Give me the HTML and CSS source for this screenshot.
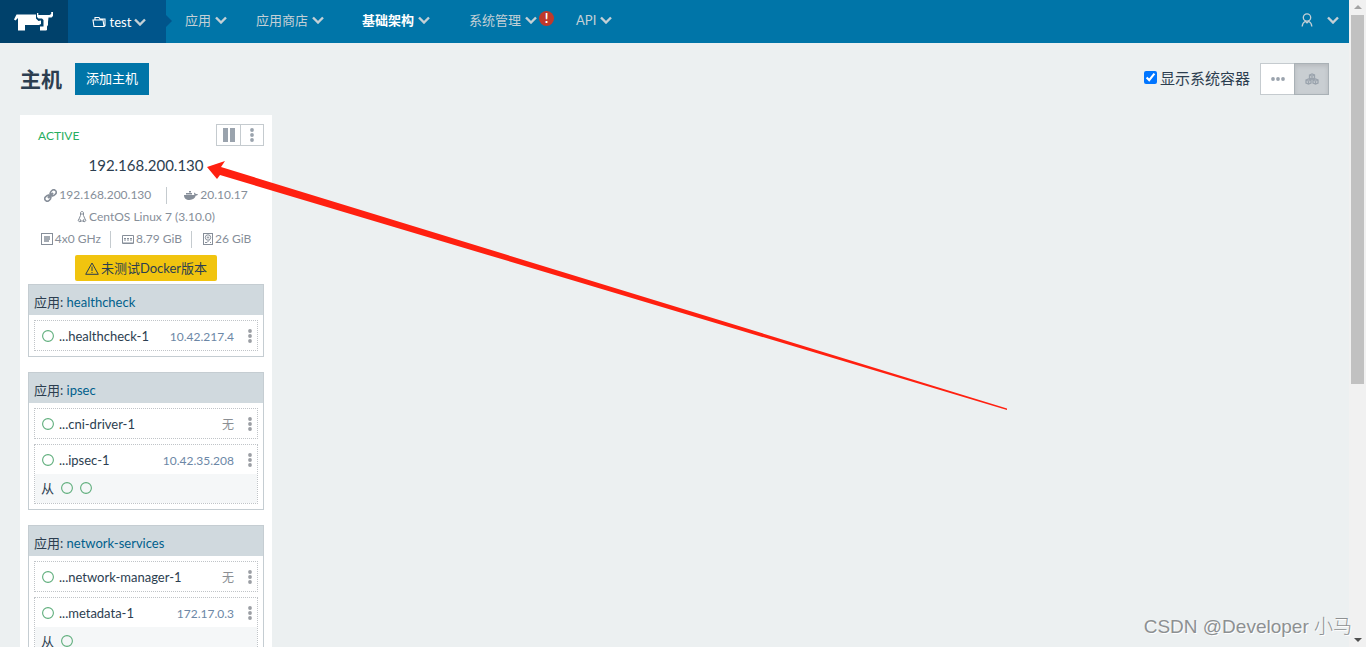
FILE: index.html
```html
<!DOCTYPE html>
<html lang="zh">
<head>
  <meta charset="UTF-8">
  <meta name="viewport" content="width=device-width, initial-scale=1">
  <title>主机</title>
  <link rel="stylesheet" href="styles.css">
</head>
<body>
  <!-- Shared icons -->
  <svg class="sprite" aria-hidden="true">
    <symbol id="chevron" viewBox="0 0 12 8"><path d="M1 1.5l5 5 5-5" fill="none" stroke="currentColor" stroke-width="2.4"/></symbol>
    <symbol id="dots" viewBox="0 0 4 14"><g fill="currentColor"><circle cx="2" cy="2" r="1.9"/><circle cx="2" cy="7" r="1.9"/><circle cx="2" cy="12" r="1.9"/></g></symbol>
    <symbol id="ring" viewBox="0 0 12 12"><circle cx="6" cy="6" r="5.4" fill="none" stroke="currentColor" stroke-width="1.1"/></symbol>
  </svg>

  <div class="window">
    <div class="page">
      <nav class="navbar">
        <a class="logo" href="#" aria-label="Home">
          <svg width="40" height="20" viewBox="0 0 40 20" fill="#fff">
            <path d="M0 7.500L2.500 2.500H22v4l2.500 2.500 2.500-.5V12l-2 1H11v5.500H4V6L1.500 8.500z"/>
            <path d="M23 1h1.300v2H35.500l1.700-1V0H39v4l-1.500 1.500H34.500L34 10v3l-1 1.500v3.500l-1 .5h-6v-4h3.500V8L28 6.500h-3.500L23 5z"/>
          </svg>
        </a>
        <a class="env" href="#">
          <svg width="14" height="12" viewBox="0 0 14 12" fill="none" stroke="#fff" stroke-width="1.100"><path d="M3 4V1.500h4l1 1.500h5v6.500l-1 1M1 4h10l1 6.500H2z"/></svg>
          <span>test</span>
          <svg class="chevron" width="12" height="8"><use href="#chevron"/></svg>
        </a>
        <div class="menu">
          <a href="#"><span>应用</span><svg class="chevron" width="12" height="8"><use href="#chevron"/></svg></a>
          <a href="#"><span>应用商店</span><svg class="chevron" width="12" height="8"><use href="#chevron"/></svg></a>
          <a class="current" href="#"><span>基础架构</span><svg class="chevron" width="12" height="8"><use href="#chevron"/></svg></a>
          <a href="#"><span>系统管理</span><svg class="chevron" width="12" height="8"><use href="#chevron"/></svg><b class="alert">!</b></a>
          <a href="#"><span>API</span><svg class="chevron" width="12" height="8"><use href="#chevron"/></svg></a>
        </div>
        <a class="user" href="#" aria-label="User">
          <svg width="12" height="14" viewBox="0 0 12 14" fill="none" stroke="currentColor" stroke-width="1.300"><circle cx="6" cy="4.500" r="3.700"/><path d="M4 8l2 1.800L8 8M4 8.500C2 9.500 1.300 11 1.200 13.500M8 8.500c2 1 2.700 2.500 2.800 5"/></svg>
          <svg class="chevron" width="12" height="8"><use href="#chevron"/></svg>
        </a>
      </nav>

      <header class="heading">
        <h1>主机</h1>
        <button class="add" type="button">添加主机</button>
        <div class="tools">
          <input type="checkbox" id="system" checked>
          <label for="system">显示系统容器</label>
          <div class="toggle">
            <button type="button" aria-label="List">
              <svg width="14" height="4" viewBox="0 0 14 4" fill="currentColor"><circle cx="2" cy="2" r="1.900"/><circle cx="7" cy="2" r="1.900"/><circle cx="12" cy="2" r="1.900"/></svg>
            </button>
            <button class="pressed" type="button" aria-label="Groups">
              <svg width="14" height="12" viewBox="0 0 14 12" fill="none" stroke="currentColor" stroke-width="1.300"><path d="M4.500 2L7 1l2.500 1v3L7 6 4.500 5zM1 7l2.500-1L6 7v3l-2.500 1L1 10zM8 7l2.500-1L13 7v3l-2.500 1L8 10zM4.500 2L7 3l2.500-1M7 3v3M1 7l2.500 1L6 7M3.500 8v3M8 7l2.500 1L13 7M10.500 8v3"/></svg>
            </button>
          </div>
        </div>
      </header>

      <main class="hosts">
        <section class="host">
          <div class="host-top">
            <span class="state">ACTIVE</span>
            <div class="actions">
              <button type="button" aria-label="Pause"><svg width="14" height="14" viewBox="0 0 14 14" fill="currentColor"><path d="M1 0h5v14H1zM8 0h5v14H8z"/></svg></button>
              <button type="button" aria-label="More"><svg width="4" height="14"><use href="#dots"/></svg></button>
            </div>
          </div>
          <h2><a href="#">192.168.200.130</a></h2>

          <div class="meta address">
            <span><svg width="13" height="13" viewBox="0 0 13 13" fill="none" stroke="currentColor"><g transform="rotate(-45 6.500 6.500)"><rect x="-.5" y="4" width="6" height="5" rx="2.500" stroke-width="1.600"/><rect x="7.500" y="4" width="6" height="5" rx="2.500" stroke-width="1.600"/><path d="M3 6.500h7" stroke-width="2.200"/><path d="M5 4.800h3M5 8.200h3"/></g></svg>192.168.200.130</span>
            <span><svg width="14" height="10" viewBox="0 0 14 10" fill="currentColor"><path d="M0 5h10.200c.3-.6.200-1.200-.2-1.800l.6-.7 1.200 1.500c.8 0 1.500 0 2.200.3-.3.900-1 1.200-2.200 1.300C10.800 8.500 9 10 5.500 10 2 10 0 8.500 0 5zM2 3h6v1.500H2zM5 1h2v1.500H5z"/></svg>20.10.17</span>
          </div>
          <div class="meta">
            <span><svg width="10" height="12" viewBox="0 0 10 12" fill="none" stroke="currentColor"><path d="M3.500 2c0-2 3-2 3 0v2.500L8 8l1 1.500L7 11l-1-1H4l-1 1-2-1.500L2 8l1.500-3.500zM3.500 10L3 8M6.500 10L7 8M4 3h2"/></svg>CentOS Linux 7 (3.10.0)</span>
          </div>
          <div class="meta specs">
            <span><svg width="12" height="12" viewBox="0 0 12 12" fill="none" stroke="currentColor"><rect x=".5" y=".5" width="11" height="11"/><path d="M3 4h6M3 6h6M3 8h5" stroke-width="1.500"/></svg>4x0 GHz</span>
            <span><svg width="12" height="9" viewBox="0 0 12 9" fill="none" stroke="currentColor"><path d="M.5.500h11v8H.500zM2 3.500h2M5 3.500h2M8 3.500h2M2 5h2M5 5h2M8 5h2M2 7v1M4 7v1M6 7v1M8 7v1M10 7v1"/></svg>8.79 GiB</span>
            <span><svg width="10" height="12" viewBox="0 0 10 12" fill="none" stroke="currentColor"><rect x=".5" y=".5" width="9" height="11"/><circle cx="5" cy="4.500" r="2.700"/><circle cx="5" cy="4.500" r=".7"/><path d="M2 9.500h2l2-2M7 9.500h1"/></svg>26 GiB</span>
          </div>
          <div class="warning">
            <svg width="14" height="13" viewBox="0 0 14 13" fill="none" stroke="currentColor"><path d="M7 1l6.300 11.300H.7zM7 4.500v4.500M7 10v1"/></svg>
            <span>未测试Docker版本</span>
          </div>

          <div class="stack">
            <h3>应用: <a href="#">healthcheck</a></h3>
            <div class="container">
              <div class="row">
                <svg class="ring" width="12" height="12"><use href="#ring"/></svg>
                <a class="name" href="#">...healthcheck-1</a>
                <span class="ip">10.42.217.4</span>
                <button type="button" aria-label="More"><svg width="4" height="14"><use href="#dots"/></svg></button>
              </div>
            </div>
          </div>

          <div class="stack">
            <h3>应用: <a href="#">ipsec</a></h3>
            <div class="container">
              <div class="row">
                <svg class="ring" width="12" height="12"><use href="#ring"/></svg>
                <a class="name" href="#">...cni-driver-1</a>
                <span class="ip none">无</span>
                <button type="button" aria-label="More"><svg width="4" height="14"><use href="#dots"/></svg></button>
              </div>
            </div>
            <div class="container">
              <div class="row">
                <svg class="ring" width="12" height="12"><use href="#ring"/></svg>
                <a class="name" href="#">...ipsec-1</a>
                <span class="ip">10.42.35.208</span>
                <button type="button" aria-label="More"><svg width="4" height="14"><use href="#dots"/></svg></button>
              </div>
              <div class="sidekicks">
                <span>从</span>
                <svg class="ring" width="12" height="12"><use href="#ring"/></svg>
                <svg class="ring" width="12" height="12"><use href="#ring"/></svg>
              </div>
            </div>
          </div>

          <div class="stack">
            <h3>应用: <a href="#">network-services</a></h3>
            <div class="container">
              <div class="row">
                <svg class="ring" width="12" height="12"><use href="#ring"/></svg>
                <a class="name" href="#">...network-manager-1</a>
                <span class="ip none">无</span>
                <button type="button" aria-label="More"><svg width="4" height="14"><use href="#dots"/></svg></button>
              </div>
            </div>
            <div class="container">
              <div class="row">
                <svg class="ring" width="12" height="12"><use href="#ring"/></svg>
                <a class="name" href="#">...metadata-1</a>
                <span class="ip">172.17.0.3</span>
                <button type="button" aria-label="More"><svg width="4" height="14"><use href="#dots"/></svg></button>
              </div>
              <div class="sidekicks">
                <span>从</span>
                <svg class="ring" width="12" height="12"><use href="#ring"/></svg>
              </div>
            </div>
          </div>
        </section>
      </main>
    </div>

    <div class="scrollbar">
      <svg width="8" height="4" viewBox="0 0 8 4"><path d="M0 4l4-4 4 4z" fill="#a3a3a3"/></svg>
      <div class="thumb"></div>
      <svg class="down" width="8" height="4" viewBox="0 0 8 4"><path d="M0 0l4 4 4-4z" fill="#505050"/></svg>
    </div>

    <svg class="arrow" width="810" height="260" viewBox="0 0 810 260" aria-hidden="true">
      <path d="M7 7L25 1l-4 6L807 248.500v1.500L20 15l-3 4z" fill="#ff2010"/>
    </svg>
    <div class="watermark">CSDN @Developer 小马</div>
  </div>
</body>
</html>
```
FILE: styles.css
```css
* {
  box-sizing: border-box;
}
body {
  margin: 0;
  font-family: Lato, "Noto Sans CJK SC", sans-serif;
  font-size: 13px;
  line-height: 20px;
  color: #2c3e50;
  background: #ecf0f1;
}
a {
  color: inherit;
  text-decoration: none;
}
button {
  padding: 0;
  font: inherit;
  cursor: pointer;
}
h1, h2, h3 {
  margin: 0;
}
svg {
  flex: none;
}
.sprite {
  display: none;
}
.window {
  position: relative;
  display: flex;
  height: 100vh;
  overflow: hidden;
}
.page {
  flex: 1;
  min-width: 0;
}

/* Top navigation */
.navbar {
  display: flex;
  height: 43px;
  background: #0075a8;
  color: #c4d0d6;
}
.logo {
  display: flex;
  align-items: center;
  justify-content: center;
  width: 68px;
  background: #00416b;
}
.env {
  position: relative;
  display: flex;
  align-items: center;
  justify-content: center;
  gap: 4px;
  width: 98px;
  padding-left: 4px;
  color: #fff;
  background: #00558b;
}
.env::after {
  content: "";
  position: absolute;
  left: 100%;
  top: 15px;
  border: 6px solid transparent;
  border-left-color: #00558b;
  border-right: 0;
}
.env .chevron {
  margin-left: -1px;
  color: #c4d0d6;
}
.menu {
  display: flex;
  gap: 1px;
  padding: 0 0 3px 5px;
}
.menu a {
  display: flex;
  align-items: center;
  gap: 4px;
  padding: 0 14px;
}
.menu .current {
  margin: 0 10px 0 9px;
  color: #fff;
  font-weight: bold;
}
.current .chevron {
  color: #c4d0d6;
}
.alert {
  width: 15px;
  height: 15px;
  margin: -4px -7px 0 -2px;
  border-radius: 50%;
  background: #c0392b;
  color: #fff;
  line-height: 15px;
  text-align: center;
}
.user {
  display: flex;
  align-items: center;
  gap: 14px;
  margin-left: auto;
  padding: 0 10px 3px;
}

/* Page heading */
.heading {
  display: flex;
  align-items: center;
  padding: 20px;
}
.heading h1 {
  font-size: 21px;
  line-height: 32px;
}
.add {
  height: 32px;
  margin-left: 13px;
  padding: 0 11px 2px;
  border: 0;
  background: #0075a8;
  color: #fff;
}
.tools {
  display: flex;
  align-items: center;
  margin-left: auto;
  font-size: 15px;
}
.tools label {
  padding-bottom: 2px;
}
.tools input {
  width: 13px;
  height: 13px;
  margin: 0 3px 3px 0;
}
.toggle {
  display: flex;
  margin-left: 10px;
}
.toggle button {
  display: flex;
  align-items: center;
  justify-content: center;
  width: 34px;
  height: 32px;
  border: 1px solid #c5cbcf;
  border-right: 0;
  background: #fff;
  color: #9aa3ad;
}
.toggle .pressed {
  width: 35px;
  border: 1px solid #a9b1b6;
  background: #c9ced2;
  box-shadow: inset 0 2px 4px rgba(0, 0, 0, 0.1);
}

/* Host card */
.hosts {
  display: flex;
  padding: 0 20px;
}
.host {
  width: 252px;
  padding: 9px 8px;
  background: #fff;
}
.host-top {
  display: flex;
  align-items: flex-start;
  justify-content: space-between;
  padding-left: 10px;
}
.state {
  color: #27ae60;
  font-size: 12px;
  line-height: 24px;
}
.actions {
  display: flex;
  border: 1px solid #c5cbcf;
}
.actions button {
  display: flex;
  align-items: center;
  justify-content: center;
  width: 23px;
  height: 20px;
  border: 0;
  background: none;
  color: #9aa3ad;
}
.actions button + button {
  border-left: 1px solid #c5cbcf;
}
.host h2 {
  padding: 5px 0 7px;
  font-size: 15px;
  font-weight: normal;
  line-height: 24px;
  text-align: center;
}
.meta {
  display: flex;
  justify-content: center;
  color: #868e99;
  font-size: 12px;
  line-height: 22px;
}
.meta span {
  display: flex;
  align-items: center;
  gap: 2px;
}
.meta span + span::before {
  content: "";
  width: 1px;
  height: 17px;
  margin: 0 9px;
  background: #c5cbcf;
}
.address span + span::before {
  margin: 0 15px;
}
.warning {
  display: flex;
  align-items: center;
  gap: 2px;
  width: fit-content;
  height: 26px;
  margin: 5px auto 3px;
  padding: 0 10px;
  border-radius: 2px;
  background: #f1c40f;
}

/* Stacks of containers */
.stack {
  display: flex;
  flex-direction: column;
  gap: 5px;
  margin-bottom: 15px;
  padding-bottom: 5px;
  border: 1px solid #c5cdd2;
}
.stack h3 {
  height: 30px;
  padding: 2px 5px 0;
  background: #d0d9de;
  font-size: 13px;
  font-weight: normal;
  line-height: 30px;
}
.stack h3 a {
  color: #005f8c;
}
.container {
  margin: 0 5px;
  border: 1px dotted #c0c4c8;
}
.row {
  display: flex;
  align-items: center;
  height: 29px;
  padding: 0 5px 0 7px;
}
.ring {
  color: #5fae7c;
}
.name {
  margin-left: 5px;
}
.ip {
  margin-left: auto;
  padding-top: 2px;
  color: #6c87a6;
  font-size: 12px;
}
.none {
  color: #8b8f94;
}
.row button {
  display: flex;
  margin-left: 14px;
  border: 0;
  background: none;
  color: #9b9ea4;
}
.sidekicks {
  display: flex;
  align-items: center;
  gap: 7px;
  height: 29px;
  padding: 0 6px 1px;
  background: #f5f7f8;
}

/* Scrollbar */
.scrollbar {
  display: flex;
  flex-direction: column;
  align-items: center;
  width: 17px;
  padding: 5px 2px;
  background: #f1f1f1;
}
.thumb {
  width: 13px;
  height: 58%;
  margin-top: 6px;
  background: #c1c1c1;
}
.down {
  margin-top: auto;
}

/* Drawn over the page */
.arrow {
  position: absolute;
  left: 200px;
  top: 160px;
}
.watermark {
  position: absolute;
  right: 14px;
  bottom: 8px;
  color: #8d9092;
  font-family: "Liberation Sans", "Noto Sans CJK SC", sans-serif;
  font-size: 19px;
  font-weight: 300;
  line-height: 24px;
  text-shadow: 1px 1px 0 #fff;
}
```
